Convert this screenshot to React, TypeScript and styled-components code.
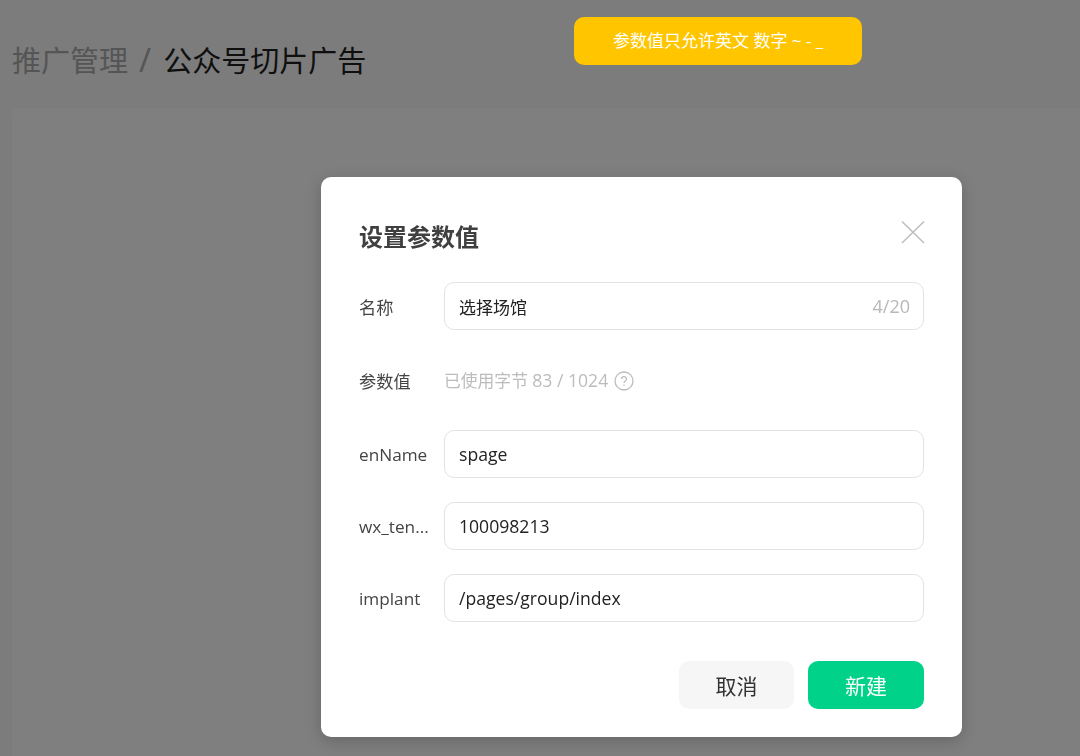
import React from "react";
import styled, { createGlobalStyle } from "styled-components";

const Global = createGlobalStyle`
  html, body { margin: 0; padding: 0; height: 100%; }
  body {
    background: #f8f8f8;
    overflow: hidden;
    font-family: "Open Sans", "Noto Sans CJK SC", sans-serif;
  }
  * { box-sizing: border-box; }
`;

const Page = styled.div`
  width: 1080px;
  height: 756px;
  padding-left: 12px;
  display: flex;
  flex-direction: column;
`;

const Breadcrumb = styled.div`
  height: 108px;
  padding-top: 39px;
  display: flex;
  align-items: flex-start;
  font-size: 29px;
  line-height: 44px;
  white-space: nowrap;
`;

const Crumb = styled.span<{ $muted?: boolean }>`
  color: ${(p) => (p.$muted ? "#aaa" : "#1f1f1f")};
`;

const Sep = styled.span`
  color: #aaa;
  font-size: 33px;
  line-height: 42px;
  margin: 0 12px 0 11px;
`;

const Card = styled.div`
  flex: 1;
  background: #fff;
  border-radius: 8px 0 0 0;
`;

const Overlay = styled.div`
  position: fixed;
  inset: 0;
  background: rgba(0, 0, 0, 0.5);
  padding: 177px 0 0 321px;
`;

const Toast = styled.div`
  position: absolute;
  left: 574px;
  top: 17px;
  width: 288px;
  height: 48px;
  background: #ffc600;
  border-radius: 10px;
  color: #fff;
  font-size: 17px;
  line-height: 48px;
  padding-left: 39px;
  white-space: nowrap;
`;

const Modal = styled.div`
  position: relative;
  width: 641px;
  height: 560px;
  background: #fff;
  border-radius: 10px;
  box-shadow: 0 4px 16px rgba(0, 0, 0, 0.2);
  padding: 41px 38px 28px 38px;
  display: flex;
  flex-direction: column;
`;

const Title = styled.h2`
  margin: 0 0 27px;
  height: 37px;
  font-size: 24px;
  line-height: 37px;
  font-weight: 700;
  color: #404040;
`;

const Close = styled.button`
  position: absolute;
  top: 43px;
  right: 37px;
  width: 24px;
  height: 24px;
  padding: 0;
  border: 0;
  background: none;
  display: flex;
`;

const Row = styled.div<{ $gap: number }>`
  display: flex;
  align-items: center;
  height: 48px;
  margin-bottom: ${(p) => p.$gap}px;
`;

const Label = styled.label`
  width: 85px;
  flex: none;
  font-size: 17.2px;
  color: #444;
  white-space: nowrap;
  overflow: hidden;
`;

const Field = styled.div`
  flex: 1;
  height: 48px;
  border: 1px solid #e3e3e3;
  border-radius: 10px;
  padding: 0 13px 0 14px;
  display: flex;
  align-items: center;
  justify-content: space-between;
  font-size: 17.6px;
  color: #222;
`;

const CjkValue = styled.span`
  font-size: 17px;
`;

const Count = styled.span`
  color: #b8b8b8;
  font-size: 18px;
`;

const Hint = styled.div`
  display: flex;
  align-items: center;
  gap: 6px;
  font-size: 16.8px;
  color: #bcbcbc;
`;

const HintNumbers = styled.span`
  font-size: 17.6px;
`;

const HelpIcon = styled.svg`
  margin-top: 1px;
`;

const Footer = styled.div`
  margin-top: 15px;
  display: flex;
  justify-content: flex-end;
  gap: 14px;
`;

const Button = styled.button<{ $primary?: boolean }>`
  height: 48px;
  width: ${(p) => (p.$primary ? 116 : 115)}px;
  border: 0;
  border-radius: 10px;
  font-family: inherit;
  font-size: 21px;
  background: ${(p) => (p.$primary ? "#00d28a" : "#f6f6f6")};
  color: ${(p) => (p.$primary ? "#fff" : "#333")};
`;

export default function App() {
  return (
    <>
      <Global />
      <Page>
        <Breadcrumb>
          <Crumb $muted>推广管理</Crumb>
          <Sep>/</Sep>
          <Crumb>公众号切片广告</Crumb>
        </Breadcrumb>
        <Card />
      </Page>
      <Overlay>
        <Toast>参数值只允许英文 数字 ~ - _</Toast>
        <Modal>
          <Title>设置参数值</Title>
          <Close aria-label="关闭">
            <svg width="24" height="24" viewBox="0 0 24 24" fill="none" stroke="#bdbdbd" strokeWidth="1.5">
              <path d="M1 1.5 23 23M23 1.5 1 23" />
            </svg>
          </Close>
          <Row $gap={26}>
            <Label>名称</Label>
            <Field>
              <CjkValue>选择场馆</CjkValue>
              <Count>4/20</Count>
            </Field>
          </Row>
          <Row $gap={26}>
            <Label>参数值</Label>
            <Hint>
              <span>
                已使用字节 <HintNumbers>83 / 1024</HintNumbers>
              </span>
              <HelpIcon width="20" height="20" viewBox="0 0 20 20" fill="none" stroke="#bcbcbc" strokeWidth="1.3">
                <circle cx="10" cy="10" r="9" />
                <path d="M7.6 8a2.4 2.4 0 1 1 3.7 2c-.9.6-1.3 1-1.3 2" />
                <path d="M10 13.6v1.2" />
              </HelpIcon>
            </Hint>
          </Row>
          <Row $gap={24}>
            <Label>enName</Label>
            <Field>spage</Field>
          </Row>
          <Row $gap={24}>
            <Label>wx_ten...</Label>
            <Field>100098213</Field>
          </Row>
          <Row $gap={24}>
            <Label>implant</Label>
            <Field>/pages/group/index</Field>
          </Row>
          <Footer>
            <Button>取消</Button>
            <Button $primary>新建</Button>
          </Footer>
        </Modal>
      </Overlay>
    </>
  );
}
